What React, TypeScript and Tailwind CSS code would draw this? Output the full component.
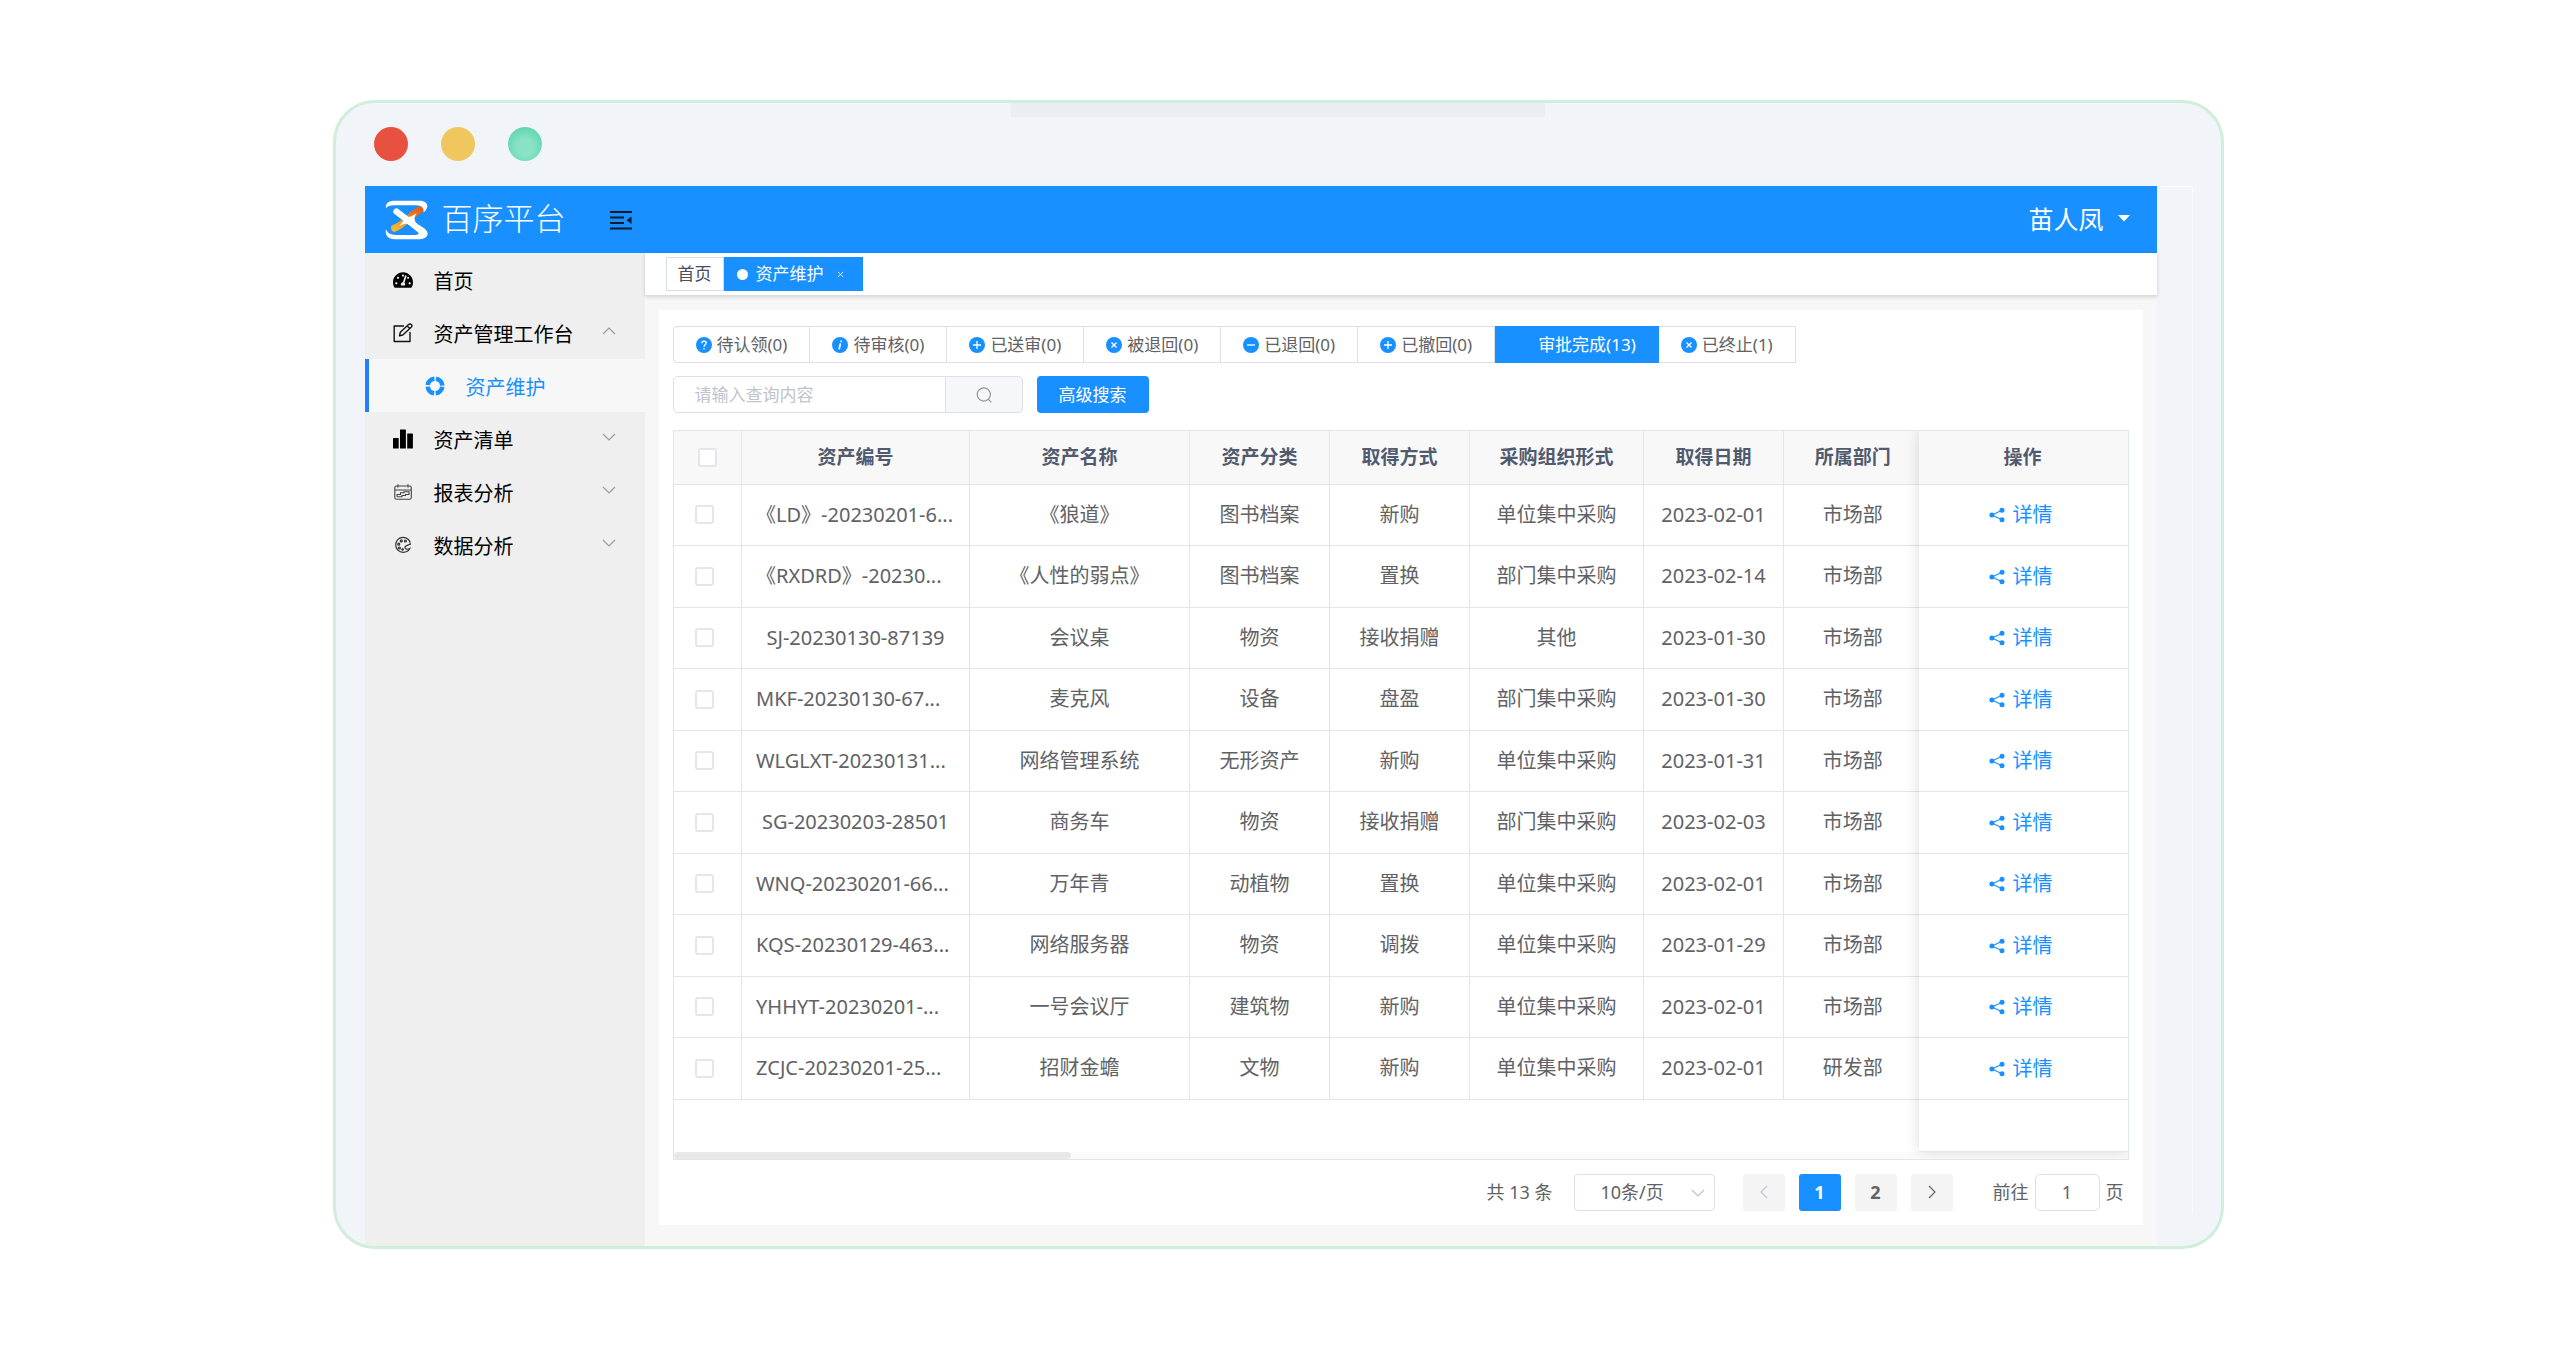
import { useState } from 'react'
import type { ReactNode } from 'react'
import { FaTachometerAlt } from 'react-icons/fa'

const rows = [
  { code: '《LD》-20230201-6...', name: '《狼道》', type: '图书档案', way: '新购', org: '单位集中采购', date: '2023-02-01', dept: '市场部' },
  { code: '《RXDRD》-20230...', name: '《人性的弱点》', type: '图书档案', way: '置换', org: '部门集中采购', date: '2023-02-14', dept: '市场部' },
  { code: 'SJ-20230130-87139', name: '会议桌', type: '物资', way: '接收捐赠', org: '其他', date: '2023-01-30', dept: '市场部' },
  { code: 'MKF-20230130-67...', name: '麦克风', type: '设备', way: '盘盈', org: '部门集中采购', date: '2023-01-30', dept: '市场部' },
  { code: 'WLGLXT-20230131...', name: '网络管理系统', type: '无形资产', way: '新购', org: '单位集中采购', date: '2023-01-31', dept: '市场部' },
  { code: 'SG-20230203-28501', name: '商务车', type: '物资', way: '接收捐赠', org: '部门集中采购', date: '2023-02-03', dept: '市场部' },
  { code: 'WNQ-20230201-66...', name: '万年青', type: '动植物', way: '置换', org: '单位集中采购', date: '2023-02-01', dept: '市场部' },
  { code: 'KQS-20230129-463...', name: '网络服务器', type: '物资', way: '调拨', org: '单位集中采购', date: '2023-01-29', dept: '市场部' },
  { code: 'YHHYT-20230201-...', name: '一号会议厅', type: '建筑物', way: '新购', org: '单位集中采购', date: '2023-02-01', dept: '市场部' },
  { code: 'ZCJC-20230201-25...', name: '招财金蟾', type: '文物', way: '新购', org: '单位集中采购', date: '2023-02-01', dept: '研发部' },
]

const columns = ['资产编号', '资产名称', '资产分类', '取得方式', '采购组织形式', '取得日期', '所属部门']

const statusTabs = [
  { label: '待认领(0)', icon: 'question' },
  { label: '待审核(0)', icon: 'info' },
  { label: '已送审(0)', icon: 'plus' },
  { label: '被退回(0)', icon: 'close' },
  { label: '已退回(0)', icon: 'minus' },
  { label: '已撤回(0)', icon: 'plus' },
  { label: '审批完成(13)', icon: 'check' },
  { label: '已终止(1)', icon: 'close' },
]

function Logo() {
  return (
    <svg viewBox="15 28 132 122" className="h-[40px] w-[43px]" fill="none" strokeLinecap="round">
      <defs>
        <linearGradient id="logo-orange" x1="0" y1="1" x2="1" y2="0">
          <stop offset="0" stopColor="#f7b52c" />
          <stop offset="1" stopColor="#e85d1a" />
        </linearGradient>
      </defs>
      <path d="M44 114 C70 106 94 72 122 58" stroke="url(#logo-orange)" strokeWidth="21" />
      <path d="M18 53 C16 38 26 30 44 30 H122 C140 30 149 42 143 54 C140 60 137 64 133 66 C135 52 128 45 112 44 H48 C34 43 24 45 18 53 Z" fill="#fff" />
      <path d="M50 63 L88 92 L126 122" stroke="#fff" strokeWidth="19" />
      <path d="M70 76 C86 84 96 78 112 68 C100 84 106 98 126 112 L100 112 C84 96 76 98 58 108 C72 94 76 86 70 76 Z" fill="#fff" />
      <path d="M18 117 C14 138 26 148 44 148 H120 C142 148 152 134 142 121 C136 113 128 109 120 104 L106 118 C122 126 122 134 108 135 H52 C34 136 22 130 18 117 Z" fill="#fff" />
    </svg>
  )
}

function FoldIcon() {
  return (
    <svg viewBox="0 0 24 20" className="h-[20px] w-[24px]" fill="none" stroke="#061a2e" strokeWidth="2">
      <path d="M1 2H23M1 7.5H15M1 13H15M1 18.5H23" />
      <path d="M22.500 6.500V14L17.500 10.200Z" fill="#061a2e" stroke="none" />
    </svg>
  )
}

function EditIcon() {
  return (
    <svg viewBox="0 0 20 20" className="size-[20px]" fill="none" stroke="#111" strokeWidth="1.400" strokeLinejoin="round" strokeLinecap="round">
      <path d="M10.500 3H1.200V18.500H17V9.500" />
      <path d="M6.500 12.800L7.300 9.300L15.600 1.500C16.500 0.700 17.700 0.800 18.400 1.600C19.100 2.400 19 3.500 18.200 4.300L9.800 12L6.500 12.800ZM14.200 2.900L16.900 5.500" />
    </svg>
  )
}

function HelpIcon() {
  return (
    <svg viewBox="0 0 20 20" className="size-[20px]" fill="none" stroke="#1890ff">
      <circle cx="10" cy="10" r="7.300" strokeWidth="4.600" strokeDasharray="9.870 1.600" strokeDashoffset="-0.800" />
    </svg>
  )
}

function BarsIcon() {
  return (
    <svg viewBox="0 0 20 20" className="size-[20px]" fill="#000">
      <rect x="0" y="9" width="5.700" height="10.500" rx="0.500" />
      <rect x="7" y="0.500" width="5.900" height="19" rx="0.500" />
      <rect x="14.200" y="4.500" width="5.700" height="15" rx="0.500" />
    </svg>
  )
}

function ReportIcon() {
  return (
    <svg viewBox="0 0 20 20" className="size-[20px]" fill="none" stroke="#444" strokeWidth="1.100">
      <rect x="1.800" y="4" width="16.500" height="13.200" rx="1.800" />
      <path d="M1.800 8H18.300M5 2.200V5.500M15 2.200V5.500" />
      <path d="M4 14.500V12.500H7.500V10.800H11V9.800H16V12.500H12.500V13.500H9V14.700H4" />
    </svg>
  )
}

function PaletteIcon() {
  return (
    <svg viewBox="0 0 20 20" className="size-[20px]" fill="none" stroke="#333" strokeWidth="1.200">
      <path d="M17.300 9.300C17.300 5.200 14 2.400 10 2.400C5.800 2.400 2.700 5.700 2.700 9.700C2.700 13.900 5.900 17.300 10.100 17.300C12.600 17.300 15.500 16.600 16.800 13.600C15 14.600 12 14.600 11.900 12.500C11.800 10.500 14.500 10.300 17.300 9.300Z" />
      <circle cx="8.300" cy="5.900" r="1" />
      <circle cx="12.400" cy="6" r="1" />
      <circle cx="5.700" cy="9.200" r="1" />
      <circle cx="6.400" cy="13" r="1" />
      <circle cx="9.600" cy="14.500" r="0.700" />
    </svg>
  )
}

function Chevron({ d, className }: { d: string; className?: string }) {
  return (
    <svg viewBox="0 0 14 14" className={`size-[14px] ${className ?? ''}`} fill="none" stroke="currentColor" strokeWidth="1.200">
      <path d={d} />
    </svg>
  )
}

function StatusIcon({ name }: { name: string }) {
  if (name === 'check') return <span className="w-[16px]" />
  return (
    <svg viewBox="0 0 16 16" className="size-[16px]" fill="none" stroke="#fff" strokeWidth="1.300">
      <circle cx="8" cy="8" r="8" fill="#1890ff" stroke="none" />
      {name === 'question' && <path d="M5.900 6.300C5.900 3.400 10.200 3.500 10.200 6.100C10.200 7.700 8 7.800 8 9.700M8 11V12.400" />}
      {name === 'info' && <path d="M9.200 3.600L8.900 5M8.500 6.400L7.100 12.300" strokeWidth="1.700" />}
      {name === 'plus' && <path d="M8 4V12M4 8H12" />}
      {name === 'minus' && <path d="M4 8H12" />}
      {name === 'close' && <path d="M5.500 5.500L10.500 10.500M10.500 5.500L5.500 10.500" />}
    </svg>
  )
}

function ShareIcon() {
  return (
    <svg viewBox="0 0 16 16" className="size-[16px]" fill="#1890ff" stroke="#1890ff">
      <path d="M13 3.200L3 8L13 12.800" fill="none" strokeWidth="1.100" />
      <circle cx="2.900" cy="8" r="2.500" stroke="none" />
      <circle cx="13" cy="3.300" r="2.500" stroke="none" />
      <circle cx="13" cy="12.700" r="2.500" stroke="none" />
    </svg>
  )
}

function MenuItem({ icon, label, arrow }: { icon: ReactNode; label: string; arrow?: 'up' | 'down' }) {
  return (
    <button className="flex h-[53px] w-full items-center pr-[29px] pl-[28px] text-left text-[20px] text-black">
      {icon}
      <span className="ml-[21px] flex-1 pt-[4px]">{label}</span>
      {arrow === 'up' && <Chevron d="M1 10L7 4L13 10" className="mb-1 text-[#9a9ca0]" />}
      {arrow === 'down' && <Chevron d="M1 4L7 10L13 4" className="mb-1 text-[#9a9ca0]" />}
    </button>
  )
}

function Checkbox({ label }: { label: string }) {
  return (
    <input
      type="checkbox"
      aria-label={label}
      className="block size-[19px] appearance-none rounded-[3px] border-2 border-[#e4e5ed] bg-white checked:bg-[#1890ff]"
    />
  )
}

export default function App() {
  const [tab, setTab] = useState(6)
  const [keyword, setKeyword] = useState('')
  const [page, setPage] = useState('1')

  return (
    <div className="min-h-screen bg-white py-[100px] pr-1 font-[family-name:'Noto_Sans','Noto_Sans_CJK_SC',sans-serif] leading-[24px]">
      <div className="relative mx-auto w-full max-w-[1891px] overflow-hidden rounded-[42px] border-[3px] border-[#d0eed9] bg-[#f1f5fa]">
        <div className="absolute top-0 left-1/2 h-[14px] w-[534px] -translate-x-1/2 bg-[#eaedf2]" />

        <div className="flex gap-[33px] px-[38px] pt-[24px] pb-[25px]">
          <span className="size-[34px] rounded-full bg-[#e85140]" />
          <span className="size-[34px] rounded-full bg-[#f0c75e]" />
          <span className="size-[34px] rounded-full bg-[radial-gradient(circle_at_50%_60%,#8ae2c6_30%,#64d8b5_70%)]" />
        </div>

        <div className="flex pr-[28px] pl-[29px]">
          <div className="min-w-0 flex-1">
            <header className="flex h-[67px] items-center bg-[#1890ff] pr-[27px] pl-[20px] text-white">
              <Logo />
              <span className="ml-[14px] pb-[3px] text-[31px] leading-[40px] font-light">百序平台</span>
              <button aria-label="收起菜单" className="ml-[43px]">
                <FoldIcon />
              </button>
              <button className="ml-auto flex items-center gap-[14px] pb-[2px] text-[25px]">
                苗人凤
                <svg viewBox="0 0 12 7" className="h-[7px] w-[12px]" fill="#fff">
                  <path d="M0 0H12L6 6.500Z" />
                </svg>
              </button>
            </header>

            <div className="flex">
              <nav className="w-[280px] shrink-0 bg-[#efefef]">
                <MenuItem icon={<FaTachometerAlt className="size-[20px]" />} label="首页" />
                <MenuItem icon={<EditIcon />} label="资产管理工作台" arrow="up" />
                <button className="flex h-[53px] w-full items-center border-l-4 border-[#2080ff] bg-[#f7f7f7] pl-[56px] text-[20px] text-[#1890ff]">
                  <HelpIcon />
                  <span className="ml-[21px] pt-[4px]">资产维护</span>
                </button>
                <MenuItem icon={<BarsIcon />} label="资产清单" arrow="down" />
                <MenuItem icon={<ReportIcon />} label="报表分析" arrow="down" />
                <MenuItem icon={<PaletteIcon />} label="数据分析" arrow="down" />
              </nav>

              <main className="min-w-0 flex-1 bg-[#f7f7f7]">
                <div className="flex h-[43px] items-center border-b border-[#d8dce5] bg-white px-[21px] text-[17px] shadow-[0_1px_4px_rgba(0,0,0,0.15)]">
                  <button className="h-[34px] border border-[#d8dce5] px-[11px] text-[#495060]">首页</button>
                  <button className="flex h-[34px] items-center bg-[#1890ff] px-[13px] text-white">
                    <span className="mr-[8px] size-[11px] rounded-full bg-white" />
                    资产维护
                    <svg viewBox="0 0 8 8" className="ml-[13px] mr-[6px] size-[7px]" stroke="#fff" strokeWidth="1">
                      <path d="M1 1L7 7M7 1L1 7" />
                    </svg>
                  </button>
                </div>

                <section className="mx-[14px] mt-[14px] mb-[21px] bg-white px-[14px] pt-[16px] pb-[14px]">
                  <div className="flex text-[17px]">
                    {statusTabs.map((t, i) => (
                      <button
                        key={t.label}
                        onClick={() => setTab(i)}
                        className={`flex h-[37px] items-center gap-[5px] border-y border-r px-[22px] first:rounded-l-[4px] first:border-l ${
                          tab === i ? 'border-[#1890ff] bg-[#1890ff] text-white' : 'border-[#dcdfe6] bg-white text-[#606266]'
                        }`}
                      >
                        <StatusIcon name={t.icon} />
                        {t.label}
                      </button>
                    ))}
                  </div>

                  <div className="mt-[13px] flex text-[17px]">
                    <input
                      aria-label="查询内容"
                      value={keyword}
                      onChange={(e) => setKeyword(e.target.value)}
                      placeholder="请输入查询内容"
                      className="h-[37px] w-[273px] rounded-l-[5px] border border-[#dcdfe6] px-[21px] text-[#606266] outline-none placeholder:text-[#c0c4cc]"
                    />
                    <button aria-label="搜索" className="flex h-[37px] w-[77px] items-center justify-center rounded-r-[5px] border border-l-0 border-[#dcdfe6] bg-[#f5f7fa]">
                      <svg viewBox="0 0 16 16" className="size-[16px]" fill="none" stroke="#909399" strokeWidth="1.200">
                        <circle cx="7.800" cy="7.500" r="6.600" />
                        <path d="M12.300 12.200L15.300 15.300" />
                      </svg>
                    </button>
                    <button className="ml-[14px] h-[37px] rounded-[4px] bg-[#1890ff] px-[22px] text-white">高级搜索</button>
                  </div>

                  <div className="relative mt-[17px] overflow-hidden border border-[#e0e6ed]">
                    <table className="w-full table-fixed border-collapse text-center text-[20px] text-[#606266]">
                      <colgroup>
                        <col className="w-[68px]" />
                        <col className="w-[228px]" />
                        <col className="w-[220px]" />
                        <col className="w-[140px]" />
                        <col className="w-[140px]" />
                        <col className="w-[174px]" />
                        <col className="w-[140px]" />
                        <col />
                        <col className="w-[210px]" />
                      </colgroup>
                      <thead>
                        <tr className="h-[53px] border-b border-[#e0e6ed] bg-[#f8f8f9] text-[19px] text-[#515a6e]">
                          <th className="border-r border-[#e0e6ed] pl-[24px]">
                            <Checkbox label="全选" />
                          </th>
                          {columns.map((c) => (
                            <th key={c} className="border-r border-[#e0e6ed] font-bold nth-8:border-r-0 nth-8:pl-1">
                              {c}
                            </th>
                          ))}
                          <th className="font-bold">操作</th>
                        </tr>
                      </thead>
                      <tbody>
                        {rows.map((r) => (
                          <tr key={r.code} className="border-b border-[#e0e6ed] odd:h-[61px] even:h-[62px]">
                            <td className="border-r border-[#e0e6ed] pl-[21px]">
                              <Checkbox label={r.code} />
                            </td>
                            <td className={`border-r border-[#e0e6ed] whitespace-nowrap ${r.code.endsWith('...') ? 'pl-[14px] text-left' : ''}`}>
                              {r.code}
                            </td>
                            <td className="border-r border-[#e0e6ed]">{r.name}</td>
                            <td className="border-r border-[#e0e6ed]">{r.type}</td>
                            <td className="border-r border-[#e0e6ed]">{r.way}</td>
                            <td className="border-r border-[#e0e6ed]">{r.org}</td>
                            <td className="border-r border-[#e0e6ed]">{r.date}</td>
                            <td className="pl-1">{r.dept}</td>
                            <td className="pr-1">
                              <a href="#" className="inline-flex items-center gap-2 align-middle text-[#1890ff]">
                                <ShareIcon />
                                详情
                              </a>
                            </td>
                          </tr>
                        ))}
                      </tbody>
                    </table>
                    <div className="h-[52px]" />
                    <div className="h-[7px] bg-[#fbfbfb]">
                      <div className="h-[7px] w-[397px] rounded-[4px] bg-[#e8e8e8]" />
                    </div>
                    {/* shadow of the pinned column */}
                    <div className="pointer-events-none absolute top-0 right-0 bottom-[7px] w-[209px] border-b border-[#e0e6ed] shadow-[0_0_14px_rgba(0,0,0,0.14)]" />
                  </div>

                  <div className="mt-[14px] flex h-[37px] items-center justify-end pr-[5px] text-[18px] text-[#606266]">
                    <span>共 13 条</span>
                    <label className="relative ml-[21px]">
                      <select aria-label="每页条数" className="h-[37px] w-[141px] appearance-none rounded-[4px] border border-[#dcdfe6] bg-white pl-[26px] outline-none">
                        <option>10条/页</option>
                        <option>20条/页</option>
                      </select>
                      <Chevron d="M1 4L7 10L13 4" className="pointer-events-none absolute top-[12px] right-[10px] text-[#c0c4cc]" />
                    </label>
                    <div className="ml-[28px] flex gap-[14px] font-bold">
                      <button aria-label="上一页" className="flex h-[37px] w-[42px] items-center justify-center rounded-[3px] bg-[#f4f4f5] text-[#c0c4cc]">
                        <Chevron d="M10 1L4 7L10 13" />
                      </button>
                      <button className="h-[37px] w-[42px] rounded-[3px] bg-[#1890ff] text-white">1</button>
                      <button className="h-[37px] w-[42px] rounded-[3px] bg-[#f4f4f5]">2</button>
                      <button aria-label="下一页" className="flex h-[37px] w-[42px] items-center justify-center rounded-[3px] bg-[#f4f4f5]">
                        <Chevron d="M4 1L10 7L4 13" />
                      </button>
                    </div>
                    <label className="ml-[40px] flex items-center gap-[6px]">
                      前往
                      <input
                        value={page}
                        onChange={(e) => setPage(e.target.value)}
                        className="h-[37px] w-[65px] rounded-[5px] border border-[#dcdfe6] text-center outline-none"
                      />
                      页
                    </label>
                  </div>
                </section>
              </main>
            </div>
          </div>
          <div className="mb-[33px] w-[36px] border-t border-r border-white/60" />
        </div>
      </div>
    </div>
  )
}
